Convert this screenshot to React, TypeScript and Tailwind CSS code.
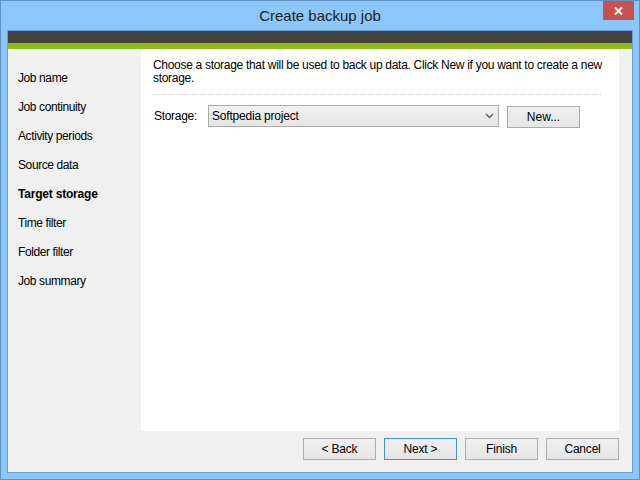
const steps = [
  "Job name",
  "Job continuity",
  "Activity periods",
  "Source data",
  "Target storage",
  "Time filter",
  "Folder filter",
  "Job summary",
];

const font = { fontFamily: '"Liberation Sans", Arial, sans-serif' };

function WinButton({ label, focused }: { label: string; focused?: boolean }) {
  return (
    <button
      className={
        "w-[73px] h-[22px] text-[12px] text-black tracking-[-0.2px] bg-gradient-to-b from-[#f0f0f0] to-[#e5e5e5] border " +
        (focused ? "border-[#3c8ef0]" : "border-[#acacac]")
      }
    >
      {label}
    </button>
  );
}

export default function App() {
  const current = "Target storage";

  return (
    <div
      className="w-[640px] h-[480px] bg-[#8cc7f9] border border-[#5f91c4] flex flex-col overflow-hidden"
      style={font}
    >
      <div className="h-[29px] flex-none relative flex items-center justify-center">
        <span className="text-[15px] text-[#1c1c1c] mt-[2px]">Create backup job</span>
        <div className="absolute right-[5px] top-0 w-[31px] h-[19px] bg-[#c75050] flex items-center justify-center">
          <svg width="9" height="8" viewBox="0 0 9 8">
            <path d="M1 0.5 L8 7.5 M8 0.5 L1 7.5" stroke="white" strokeWidth="2" />
          </svg>
        </div>
      </div>

      <div className="mx-[6px] border border-[#6ba0d4] flex-1 flex flex-col bg-[#f0f0f0]">
        <div className="h-[12px] bg-[#424242]" />
        <div className="h-[6px] bg-[#8dba14]" />

        <div className="flex h-[382px]">
          <div className="w-[133px] pt-[20px] pl-[10px] flex flex-col">
            {steps.map((s) => (
              <div
                key={s}
                className={
                  "h-[29px] text-[12px] text-black " +
                  (s === current ? "font-bold tracking-[-0.2px]" : "tracking-[-0.4px]")
                }
              >
                {s}
              </div>
            ))}
          </div>
          <div className="w-[478px] bg-white pl-[12px] pr-[4px] pt-[10px]">
            <p className="text-[12px] leading-[13px] text-black tracking-[-0.3px]">
              Choose a storage that will be used to back up data. Click New if you want to create a new
              storage.
            </p>
            <div className="mt-[9px] mr-[14px] border-t border-dotted border-[#c8c8c8]" />
            <div className="mt-[9px] flex items-center">
              <span className="w-[55px] pl-[1px] text-[12px] text-black tracking-[-0.3px]">Storage:</span>
              <div className="w-[291px] h-[22px] border border-[#acacac] bg-gradient-to-b from-[#f0f0f0] to-[#e5e5e5] flex items-center pl-[3px] pr-[4px]">
                <span className="flex-1 text-[12px] text-black tracking-[-0.2px]">Softpedia project</span>
                <svg width="9" height="6" viewBox="0 0 9 6">
                  <path d="M1 1 L4.5 4.5 L8 1" stroke="#606060" strokeWidth="1.4" fill="none" />
                </svg>
              </div>
              <div className="ml-[8px]">
                <button className="w-[73px] h-[22px] text-[12px] text-black bg-gradient-to-b from-[#f0f0f0] to-[#e5e5e5] border border-[#acacac]">
                  New...
                </button>
              </div>
            </div>
          </div>
        </div>

        <div className="flex justify-end gap-[8px] pr-[13px] pt-[7px]">
          <WinButton label="< Back" />
          <WinButton label="Next >" focused />
          <WinButton label="Finish" />
          <WinButton label="Cancel" />
        </div>
      </div>
      <div className="h-[6px] flex-none" />
    </div>
  );
}
